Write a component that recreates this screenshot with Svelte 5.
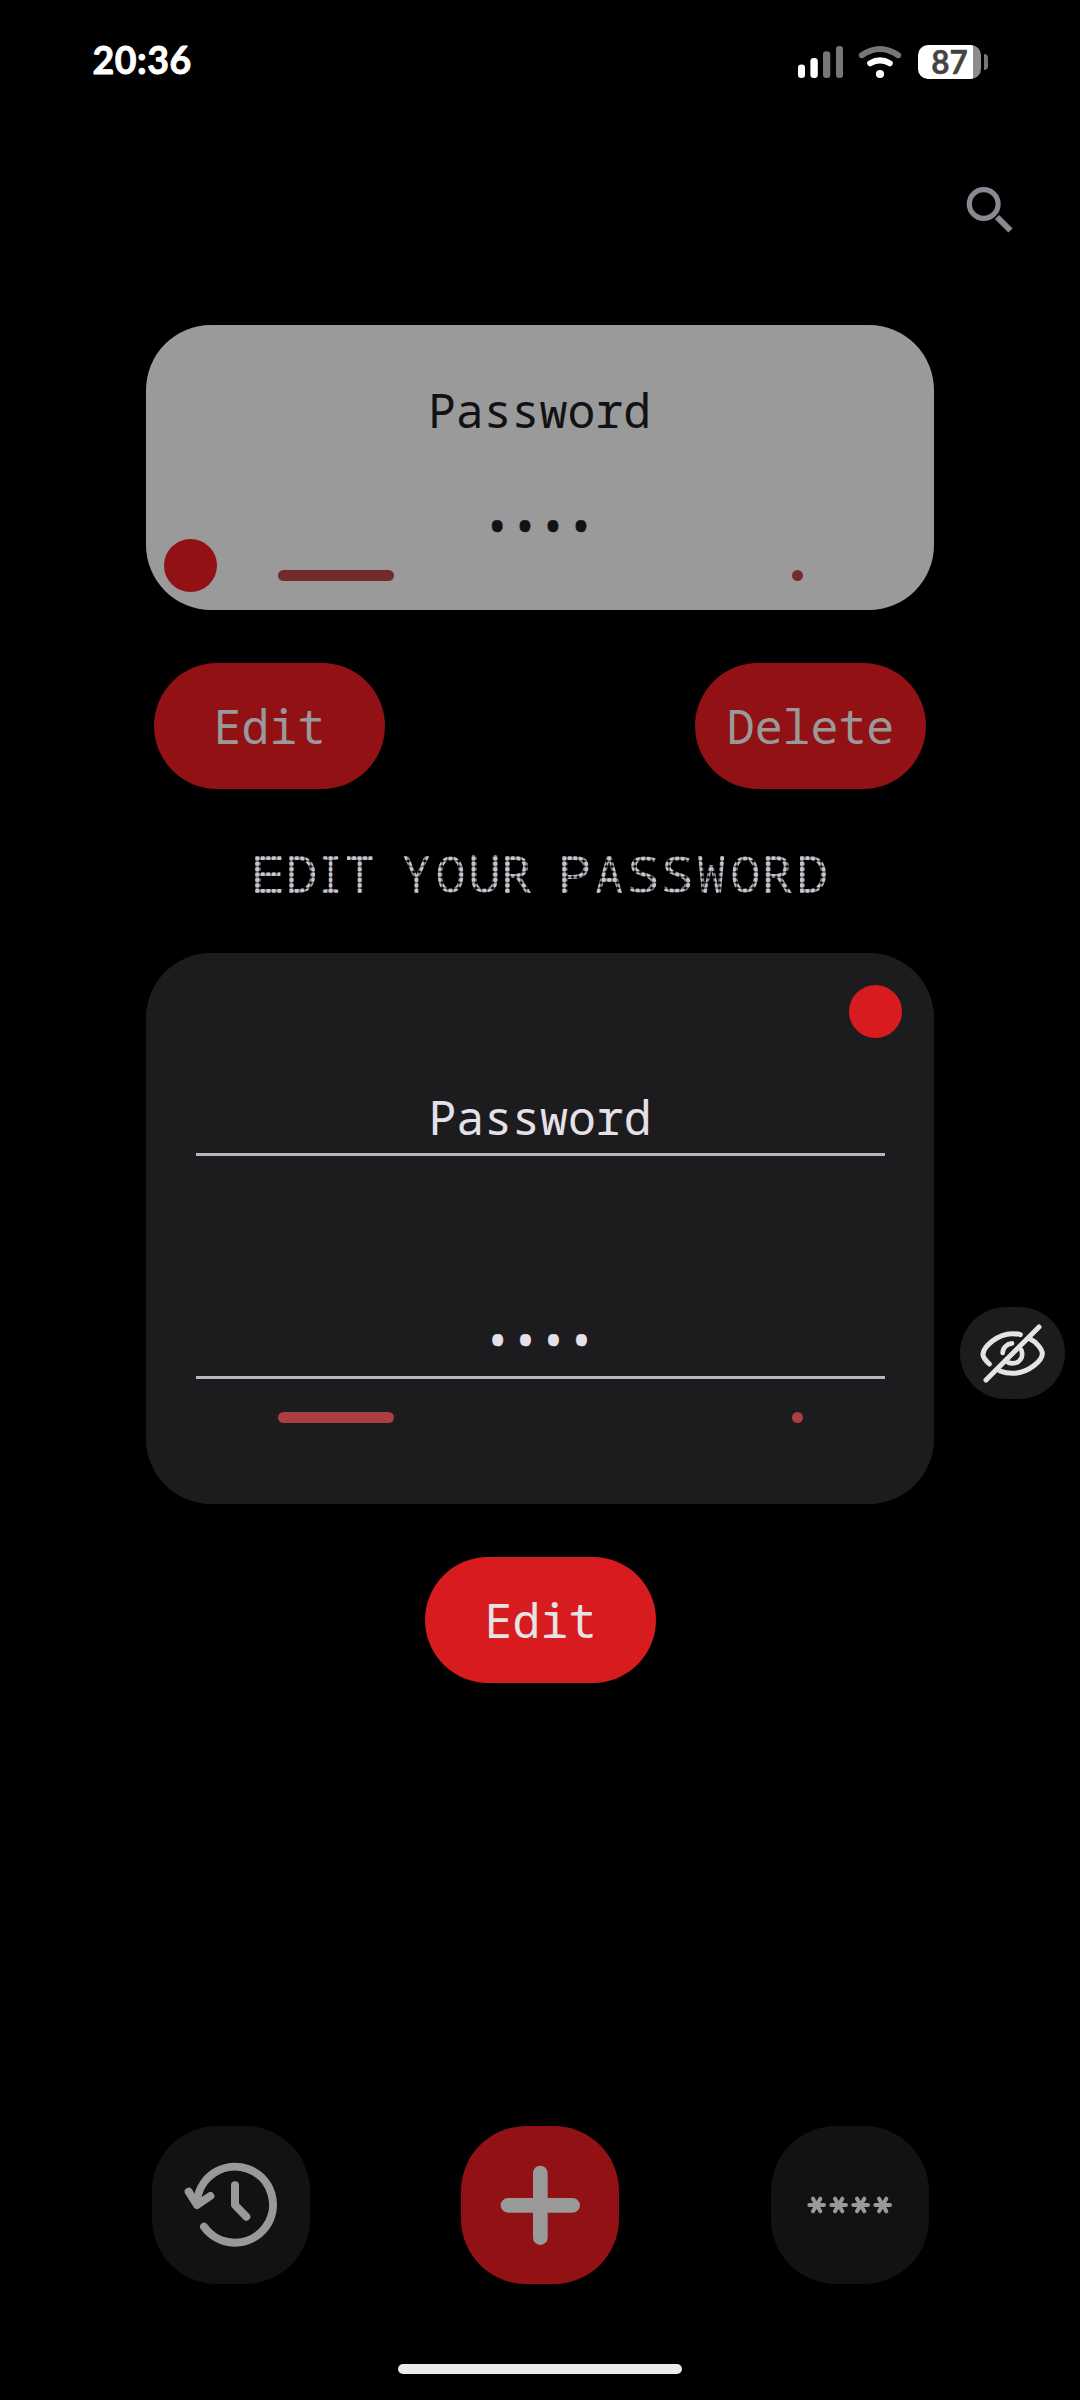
<script>
  const title = 'EDIT YOUR PASSWORD';
  const stars = [137, 203, 269, 335];

  // Each heading letter is fitted to a 5x7 dot cell (3x7 for the I), then filled with a dot pattern.
  // Measured at a large size, so that the bounds are not rounded to whole pixels.
  const monoStack = '"Droid Sans Mono", "Noto Sans Mono", "DejaVu Sans Mono", monospace';
  const ctx = document.createElement('canvas').getContext('2d');
  ctx.font = `1000px ${monoStack}`;
  let pen = 0;
  const letters = [];
  for (const ch of title) {
    if (ch === ' ') {
      pen += 23;
      continue;
    }
    const m = ctx.measureText(ch);
    const left = m.actualBoundingBoxLeft / 20;
    const right = m.actualBoundingBoxRight / 20;
    const up = m.actualBoundingBoxAscent / 20;
    const down = m.actualBoundingBoxDescent / 20;
    const cell = ch === 'I' ? 15.7 : 26.7;
    letters.push({ ch, sx: cell / (right + left), sy: 37.1 / (up + down), pen, x: left, y: -down });
    pen += ch === 'I' ? 23.3 : 33.95;
  }
</script>

<div class="screen">
  <header class="status">
    <svg class="clock" viewBox="0 0 120 44" width="120" height="44"><text x="0.5" y="34">20:36</text></svg>
    <div class="indicators">
      <svg class="signal" viewBox="0 0 46 34" width="46" height="34">
        <rect x="0" y="19.5" width="7" height="13.5" rx="3.3" fill="#fff" />
        <rect x="12.4" y="13" width="7.4" height="20" rx="3.3" fill="#fff" />
        <rect x="25" y="6.3" width="7.3" height="26.7" rx="3.3" fill="#777" />
        <rect x="38" y="1" width="7" height="32" rx="3.3" fill="#777" />
      </svg>
      <svg class="wifi" viewBox="0 0 44 34" width="44" height="34" fill="none" stroke-linecap="round" stroke-width="6">
        <path d="M3.8 10.2Q22-2.2 40.2 10.2" stroke="#777" />
        <path d="M12.2 18.3Q22 12.4 31.8 18.3" stroke="#fff" />
        <circle cx="22" cy="29" r="4.1" fill="#fff" />
      </svg>
      <div class="battery">
        <svg viewBox="0 0 63 34" width="63" height="34"><text x="31.5" y="28.5" text-anchor="middle">87</text></svg>
      </div>
      <span class="nub"></span>
    </div>
  </header>

  <div class="toolbar">
    <svg viewBox="0 0 48 48" width="48" height="48" fill="none" stroke="#8b8891">
      <circle cx="18.7" cy="19" r="14.4" stroke-width="5.2" />
      <path d="M32 32L45.5 45.5" stroke-width="6" />
    </svg>
  </div>

  <section class="card saved">
    <p class="label">Password</p>
    <p class="secret">••••</p>
    <div class="meter"><span class="bar"></span><span class="dot"></span></div>
    <span class="knob"></span>
  </section>

  <div class="actions">
    <button class="pill muted">Edit</button>
    <button class="pill muted">Delete</button>
  </div>

  <h1 aria-label={title}>
    <svg viewBox="0 0 580 44" width="580" height="44">
      {#each letters as l, i}
        <pattern id="dots{i}" patternUnits="userSpaceOnUse" x="-0.4" y="-5.05" width="5.5" height="5.4" patternTransform="scale({1 / l.sx} {1 / l.sy})">
          <circle cx="2.75" cy="2.7" r="2.5" fill="#cac4d0" />
        </pattern>
        <text
          class="matrix"
          transform="translate({l.pen} 39.1) scale({l.sx} {l.sy})"
          x={l.x}
          y={l.y}
          fill="url(#dots{i})">{l.ch}</text>
      {/each}
    </svg>
  </h1>

  <section class="card editor">
    <p class="field">Password</p>
    <p class="field hidden-value">••••</p>
    <div class="meter"><span class="bar"></span><span class="dot"></span></div>
    <span class="knob"></span>
    <button class="reveal" aria-label="Show password">
      <svg viewBox="0 0 315 276" width="105" height="92" fill="none" stroke="#e4e4e4" stroke-width="15" stroke-linecap="round">
        <path d="M88 171C74 158 68 147 69 140C72 119 112 80 157 80C167 80 174 81 181 83" />
        <path d="M207 94C231 106 247 128 247 140C247 158 208 199 157 199C145 199 132 197 120 192" />
        <path d="M128 138C128 122 141 110 156 109" stroke-width="14" />
        <path d="M184 129C192 150 179 169 158 169C150 169 144 167 139 163" stroke-width="14" />
        <path d="M78 219L237 60" />
      </svg>
    </button>
  </section>

  <button class="pill confirm">Edit</button>

  <nav>
    <button class="tile" aria-label="History">
      <svg viewBox="0 0 474 474" width="158" height="158" fill="none" stroke="#999" stroke-width="24" stroke-linecap="round" stroke-linejoin="round">
        <path d="M135 234A114 114 0 1 1 156 302" />
        <path d="M110 197L135 237L175 210" />
        <path d="M249 178V237L283 272" />
      </svg>
    </button>
    <button class="tile add" aria-label="Add">
      <svg viewBox="0 0 474 474" width="158" height="158" stroke="#999" stroke-width="44" stroke-linecap="round">
        <path d="M238 141V335M141 238H335" />
      </svg>
    </button>
    <button class="tile" aria-label="Passwords">
      <svg viewBox="0 0 474 474" width="158" height="158" stroke="#999" stroke-width="12" stroke-linecap="round">
        {#each stars as x}
          <path d="M{x - 22} 237H{x + 22}M{x - 11} 218L{x + 11} 256M{x + 11} 218L{x - 11} 256" />
        {/each}
      </svg>
    </button>
  </nav>
  <div class="home"></div>
</div>

<style>
  :global(body) { background: #000; }
  .screen {
    width: 1080px; height: 2400px; box-sizing: border-box; background: #000;
    display: flex; flex-direction: column; overflow: hidden;
    font-family: "Droid Sans Mono", "Noto Sans Mono", "DejaVu Sans Mono", monospace;
    font-size: 46.5px; line-height: 60px;
  }
  p, h1 { margin: 0; font-weight: 400; }
  button { border: 0; padding: 0; font: inherit; color: inherit; }
  svg { display: block; overflow: visible; }

  .status { display: flex; justify-content: space-between; height: 39px; padding: 40px 96px 0 92px; }
  .clock text {
    font: 700 37.5px Lato, sans-serif; fill: #fff; stroke: #fff; stroke-width: 0.9px; stroke-linejoin: round; letter-spacing: 0.5px;
  }
  .indicators { display: flex; align-items: flex-start; padding-top: 5px; }
  .wifi { margin: 0 16px 0 14.5px; }
  .battery { width: 63px; height: 34px; border-radius: 10px; background: linear-gradient(90deg, #fff 55px, #8d8d8d 55px); }
  .battery text { font: 700 31.5px Lato, sans-serif; fill: #444; stroke: #444; stroke-width: 0.4px; stroke-linejoin: round; }
  .nub { width: 4px; height: 16px; margin: 9px -4px 0 3px; background: #777; border-radius: 0 4px 4px 0; }

  .toolbar { display: flex; justify-content: flex-end; height: 140px; padding: 106px 67px 0 0; }

  .card { position: relative; flex: none; width: 788px; box-sizing: border-box; border-radius: 65px; margin-left: 146px; text-align: center; }
  .saved { height: 285px; background: #9a9a9a; color: #121214; padding-top: 54.5px; }
  .label { padding-right: 1px; }
  .secret { margin-top: 55.5px; padding-right: 2px; -webkit-text-stroke: 0.5px currentColor; }
  .meter { display: flex; justify-content: space-between; padding: 0 131px 0 132px; }
  .bar { width: 116px; height: 11px; border-radius: 6px; background: #732a2d; }
  .dot { width: 11px; height: 11px; border-radius: 50%; background: #732a2d; }
  .saved .meter { margin-top: 15px; }
  .knob { position: absolute; left: 18px; bottom: 18px; width: 53px; height: 53px; border-radius: 50%; background: #911115; }

  .actions { flex: none; display: flex; justify-content: space-between; padding: 53px 154px 0; }
  .pill { flex: none; box-sizing: border-box; width: 231px; height: 126px; border-radius: 63px; background: #d81b1f; color: #e4e4e4; line-height: 60px; }
  .muted { background: #911115; color: #999; }

  h1 { flex: none; height: 44px; margin: 65px 0 55px 254.7px; }
  .matrix { font: 400 50px "Droid Sans Mono", "Noto Sans Mono", "DejaVu Sans Mono", monospace; }

  .editor { height: 551px; background: #1c1c1e; color: #e6e0e9; padding: 143px 0 0; }
  .field { box-sizing: border-box; width: 689px; height: 60px; margin: 0 0 0 50px; padding-right: 1px; line-height: 42px; border-bottom: 3px solid #bbb6c2; }
  .hidden-value { margin-top: 163px; line-height: 40px; padding-right: 2px; -webkit-text-stroke: 0.5px currentColor; }
  .editor .meter { margin-top: 33px; }
  .editor .bar, .editor .dot { background: #aa3e40; }
  .editor .knob { left: 703px; top: 32px; background: #d81b1f; }
  .reveal { position: absolute; left: 814px; top: 354px; width: 105px; height: 92px; border-radius: 46px; background: #1c1c1e; }

  .confirm { margin: 53px 0 0 425px; }

  nav { flex: none; display: flex; padding: 0 151px 0 152px; margin-top: 443px; }
  .tile { width: 158px; height: 158px; border-radius: 65px; background: #121214; }
  .add { background: #911115; margin: 0 152px 0 151px; }
  .home { width: 284px; height: 10px; border-radius: 5px; background: #ebebeb; margin: 80px auto 0; flex: none; }
</style>
